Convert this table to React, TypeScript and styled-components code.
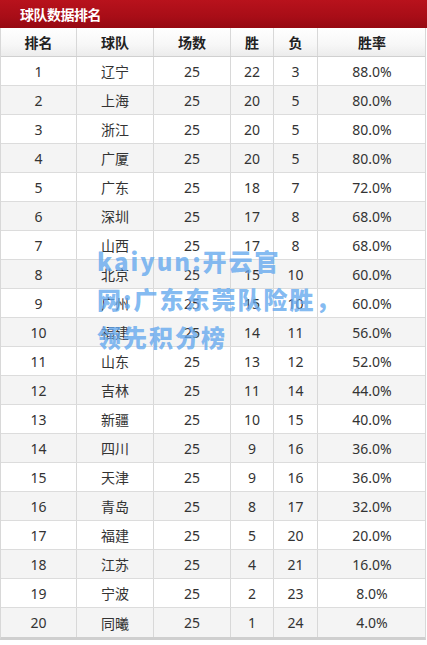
import React from 'react';
import styled, { createGlobalStyle } from 'styled-components';

interface TeamRow {
	rank: number;
	team: string;
	played: number;
	win: number;
	lose: number;
	rate: string;
}

const rows: TeamRow[] = [
	{ rank: 1, team: '辽宁', played: 25, win: 22, lose: 3, rate: '88.0%' },
	{ rank: 2, team: '上海', played: 25, win: 20, lose: 5, rate: '80.0%' },
	{ rank: 3, team: '浙江', played: 25, win: 20, lose: 5, rate: '80.0%' },
	{ rank: 4, team: '广厦', played: 25, win: 20, lose: 5, rate: '80.0%' },
	{ rank: 5, team: '广东', played: 25, win: 18, lose: 7, rate: '72.0%' },
	{ rank: 6, team: '深圳', played: 25, win: 17, lose: 8, rate: '68.0%' },
	{ rank: 7, team: '山西', played: 25, win: 17, lose: 8, rate: '68.0%' },
	{ rank: 8, team: '北京', played: 25, win: 15, lose: 10, rate: '60.0%' },
	{ rank: 9, team: '广州', played: 25, win: 15, lose: 10, rate: '60.0%' },
	{ rank: 10, team: '福建', played: 25, win: 14, lose: 11, rate: '56.0%' },
	{ rank: 11, team: '山东', played: 25, win: 13, lose: 12, rate: '52.0%' },
	{ rank: 12, team: '吉林', played: 25, win: 11, lose: 14, rate: '44.0%' },
	{ rank: 13, team: '新疆', played: 25, win: 10, lose: 15, rate: '40.0%' },
	{ rank: 14, team: '四川', played: 25, win: 9, lose: 16, rate: '36.0%' },
	{ rank: 15, team: '天津', played: 25, win: 9, lose: 16, rate: '36.0%' },
	{ rank: 16, team: '青岛', played: 25, win: 8, lose: 17, rate: '32.0%' },
	{ rank: 17, team: '福建', played: 25, win: 5, lose: 20, rate: '20.0%' },
	{ rank: 18, team: '江苏', played: 25, win: 4, lose: 21, rate: '16.0%' },
	{ rank: 19, team: '宁波', played: 25, win: 2, lose: 23, rate: '8.0%' },
	{ rank: 20, team: '同曦', played: 25, win: 1, lose: 24, rate: '4.0%' },
];

const GlobalStyle = createGlobalStyle`
	body {
		margin: 0;
		background: #ffffff;
		font-family: 'Noto Sans', 'Noto Sans CJK SC', sans-serif;
	}
`;

const COLS = '76px 77px 77px 43px 44px 108px';

const App = () => {
	return (
		<Page>
			<GlobalStyle />
			<TitleBar>球队数据排名</TitleBar>
			<Table>
				<HeadRow>
					<HeadCell>排名</HeadCell>
					<HeadCell>球队</HeadCell>
					<HeadCell>场数</HeadCell>
					<HeadCell>胜</HeadCell>
					<HeadCell>负</HeadCell>
					<HeadCell>胜率</HeadCell>
				</HeadRow>
				{rows.map((r) => (
					<Row key={r.rank} striped={r.rank % 2 === 0}>
						<Cell>{r.rank}</Cell>
						<Cell>{r.team}</Cell>
						<Cell>{r.played}</Cell>
						<Cell>{r.win}</Cell>
						<Cell>{r.lose}</Cell>
						<Cell>{r.rate}</Cell>
					</Row>
				))}
			</Table>
			<Watermark>
				kaiyun:开云官
				<br />
				网:广东东莞队险胜，
				<br />
				领先积分榜
			</Watermark>
		</Page>
	);
};

const Page = styled.div`
	position: relative;
	width: 427px;
	height: 645px;
	overflow: hidden;
	background: #fff;
`;

const TitleBar = styled.div`
	height: 28px;
	box-sizing: border-box;
	padding-left: 20px;
	display: flex;
	align-items: center;
	background: linear-gradient(to bottom, #b8121c 0%, #a80d17 60%, #960912 100%);
	color: #fff;
	font-size: 14px;
	font-weight: 700;
	font-family: 'Noto Sans CJK SC', sans-serif;
	letter-spacing: -0.5px;
`;

const Table = styled.div`
	width: 426px;
	border-left: 1px solid #d8d8d8;
	border-right: 1px solid #d8d8d8;
	border-bottom: 3px solid #cfcfcf;
	box-sizing: border-box;
`;

const HeadRow = styled.div`
	display: grid;
	grid-template-columns: ${COLS};
	height: 29px;
	background: linear-gradient(to bottom, #ffffff 0%, #f7f7f7 60%, #ececec 100%);
	border-bottom: 1px solid #d0d0d0;
	box-sizing: border-box;
`;

const HeadCell = styled.div`
	display: flex;
	align-items: center;
	justify-content: center;
	border-right: 1px solid #d8d8d8;
	font-size: 14px;
	font-weight: 700;
	color: #222;
	font-family: 'Noto Sans CJK SC', sans-serif;

	&:last-child {
		border-right: none;
	}
`;

const Row = styled.div<{ striped: boolean }>`
	display: grid;
	grid-template-columns: ${COLS};
	height: 29px;
	box-sizing: border-box;
	border-bottom: 1px solid #dcdcdc;
	background: ${(p) => (p.striped ? '#f4f4f4' : '#ffffff')};

	&:last-child {
		border-bottom: none;
	}
`;

const Cell = styled.div`
	display: flex;
	align-items: center;
	justify-content: center;
	border-right: 1px solid #d8d8d8;
	font-size: 14px;
	color: #333;

	&:last-child {
		border-right: none;
	}
`;

const Watermark = styled.div`
	position: absolute;
	left: 97px;
	top: 242px;
	font-family: 'Noto Sans CJK SC', sans-serif;
	font-weight: 900;
	font-size: 24px;
	line-height: 38px;
	letter-spacing: 2px;
	color: rgba(100, 168, 238, 0.8);
	white-space: nowrap;
`;

export default App;
